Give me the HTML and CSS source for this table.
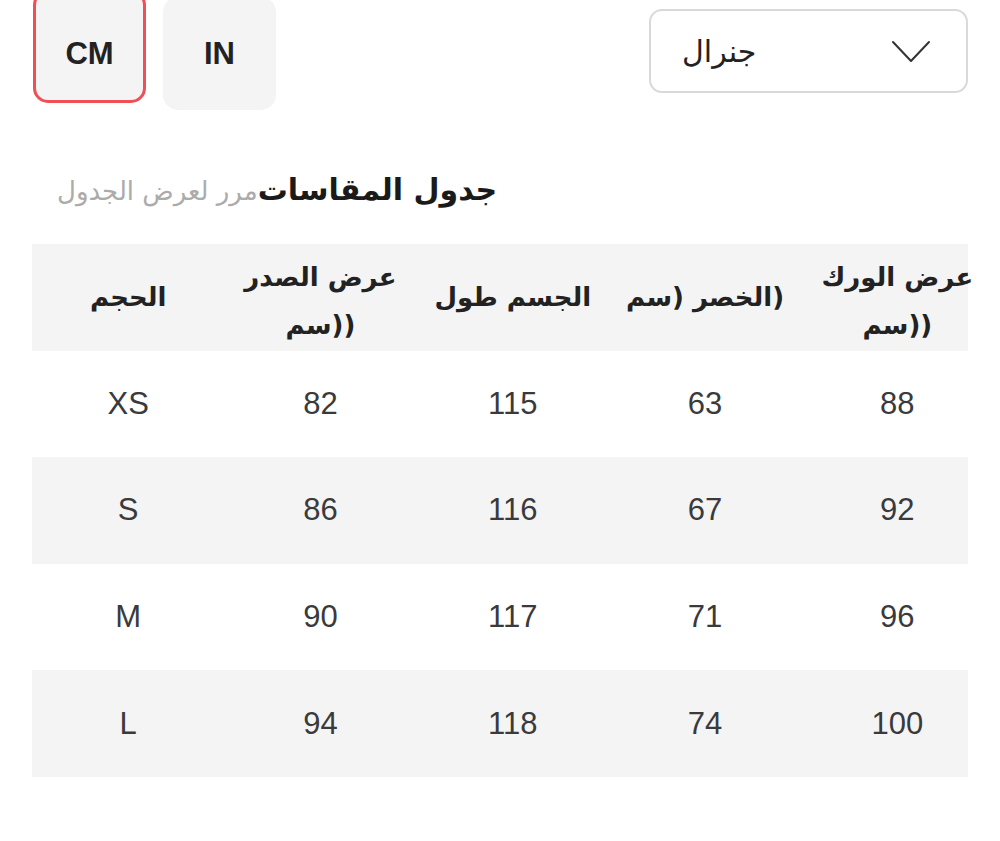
FILE: index.html
```html
<!DOCTYPE html>
<html lang="ar">
<head>
<meta charset="utf-8">
<title>جدول المقاسات</title>
<link rel="stylesheet" href="styles.css">
</head>
<body>
<div class="page">
  <div class="top">
    <div class="units">
      <div class="unit active">CM</div>
      <div class="unit in">IN</div>
    </div>
    <div class="select">
      <span class="select-text">جنرال</span>
      <svg class="chev" width="40" height="26" viewBox="0 0 40 26"><path d="M2 4 L20 23 L38 4" fill="none" stroke="#333" stroke-width="2" stroke-linecap="round" stroke-linejoin="round"/></svg>
    </div>
  </div>

  <div class="title"><span class="title-main">جدول المقاسات</span><span class="title-hint">&#8204;مرر لعرض الجدول</span></div>

  <div class="table">
    <div class="row head">
      <div class="cell">الحجم</div>
      <div class="cell two">عرض الصدر (سم&#8296;)&#8297;</div>
      <div class="cell">الجسم طول</div>
      <div class="cell">الخصر (سم&#8296;)&#8297;</div>
      <div class="cell two">عرض الورك (سم&#8296;)&#8297;</div>
    </div>
    <div class="row">
      <div class="cell">XS</div><div class="cell">82</div><div class="cell">115</div><div class="cell">63</div><div class="cell">88</div>
    </div>
    <div class="row alt">
      <div class="cell">S</div><div class="cell">86</div><div class="cell">116</div><div class="cell">67</div><div class="cell">92</div>
    </div>
    <div class="row">
      <div class="cell">M</div><div class="cell">90</div><div class="cell">117</div><div class="cell">71</div><div class="cell">96</div>
    </div>
    <div class="row alt">
      <div class="cell">L</div><div class="cell">94</div><div class="cell">118</div><div class="cell">74</div><div class="cell">100</div>
    </div>
  </div>
</div>
</body>
</html>
```

FILE: styles.css
```css
html, body {
  margin: 0;
  padding: 0;
  background: #ffffff;
}
body {
  font-family: "Liberation Sans", "DejaVu Sans", sans-serif;
  color: #333;
  overflow: hidden;
}
.page {
  width: 1000px;
  height: 841px;
  overflow: hidden;
}
.top {
  display: flex;
  justify-content: space-between;
  align-items: flex-start;
  margin-top: -10px;
  padding: 0 32px 0 33px;
}
.units {
  display: flex;
  gap: 17px;
  align-items: flex-start;
}
.unit {
  box-sizing: border-box;
  width: 113px;
  height: 113px;
  border-radius: 15px;
  background: #f4f4f4;
  display: flex;
  align-items: center;
  justify-content: center;
  font-weight: 700;
  font-size: 31px;
  color: #222;
  padding-top: 14px;
}
.unit.active {
  border: 3px solid #ef4f55;
}
.unit.in {
  margin-top: 7px;
  padding-top: 0;
}
.select {
  box-sizing: border-box;
  margin-top: 19px;
  width: 319px;
  height: 84px;
  border: 2px solid #d9d9d9;
  border-radius: 13px;
  display: flex;
  align-items: center;
  justify-content: space-between;
  padding: 0 35px 0 31px;
}
.select-text {
  font-family: "DejaVu Sans", sans-serif;
  font-size: 30px;
  color: #222;
}
.chev {
  display: block;
}
.title {
  margin-top: 55px;
  padding-left: 57px;
  height: 50px;
  line-height: 50px;
  direction: ltr;
  text-align: left;
  font-family: "DejaVu Sans", sans-serif;
  white-space: nowrap;
}
.title-main {
  font-size: 30px;
  font-weight: 700;
  color: #1a1a1a;
}
.title-hint {
  font-size: 26px;
  color: #ababab;
}
.table {
  margin: 29px 0 0 32px;
  width: 936px;
}
.row {
  display: grid;
  grid-template-columns: repeat(5, 192.3px);
  width: 936px;
  height: 106.6px;
  align-items: center;
  direction: ltr;
}
.row.head,
.row.alt {
  background: #f4f4f4;
}
.cell {
  text-align: center;
  font-size: 31px;
  color: #3a3a3c;
}
.head .cell {
  font-family: "DejaVu Sans", sans-serif;
  font-weight: 700;
  font-size: 26px;
  line-height: 48px;
  color: #222;
  padding: 0 12px;
}
.head .cell.two {
  padding-top: 8px;
}
```
